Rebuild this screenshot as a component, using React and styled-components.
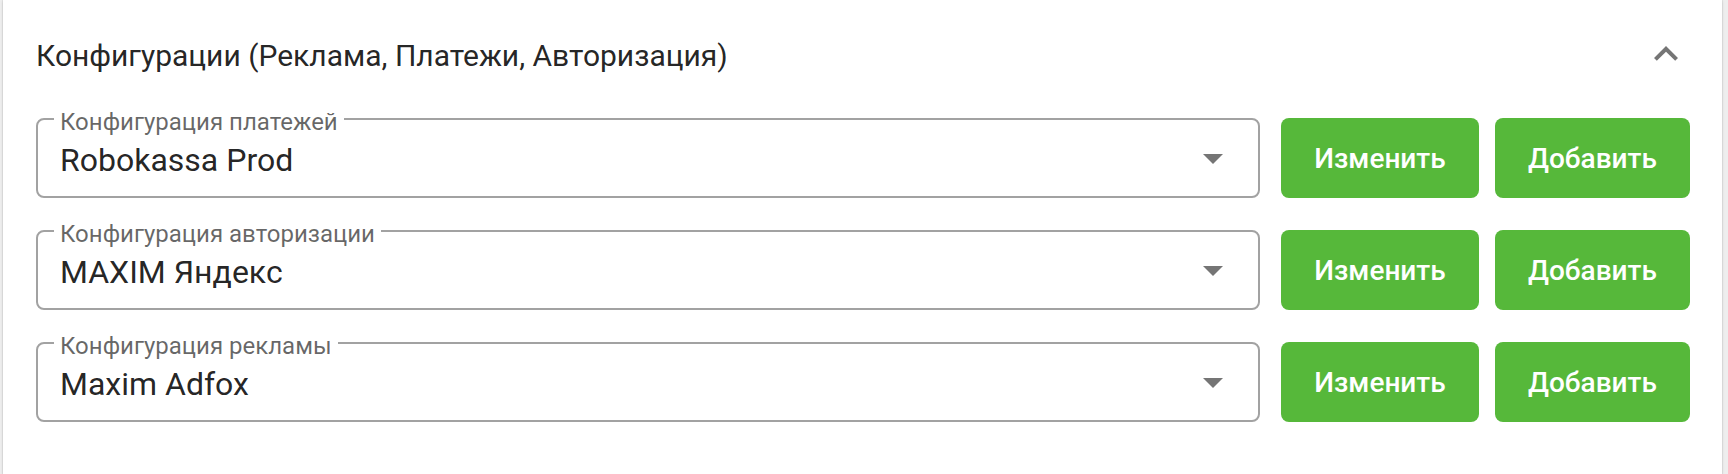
import React from 'react';
import styled, { createGlobalStyle } from 'styled-components';

const Global = createGlobalStyle`
  html, body {
    margin: 0;
    padding: 0;
    background: #eeeeee;
  }
  body {
    font-family: Roboto, "Noto Sans", "Liberation Sans", sans-serif;
  }
  * { box-sizing: border-box; }
`;

const Page = styled.div`
  padding: 0 6px 0 3px;
  min-height: 474px;
`;

const Card = styled.section`
  background: #ffffff;
  min-height: 474px;
  padding: 0 32px 0 33px;
  box-shadow: 0 0 1px rgba(0, 0, 0, 0.3), 0 1px 3px rgba(0, 0, 0, 0.12);
`;

const Header = styled.div`
  height: 107px;
  display: flex;
  align-items: center;
  justify-content: space-between;
`;

const Title = styled.h2`
  margin: 0;
  padding-top: 4px;
  font-size: 30px;
  font-weight: 400;
  line-height: 1.5;
  color: rgba(0, 0, 0, 0.87);
`;

const IconSvg = styled.svg`
  width: 48px;
  height: 48px;
  flex: none;
  fill: #757575;
  display: block;
`;

const Details = styled.div`
  padding-top: 11px;
  display: flex;
  flex-direction: column;
  gap: 32px;
`;

const Row = styled.div`
  display: flex;
  align-items: stretch;
  height: 80px;
`;

const Field = styled.div`
  position: relative;
  flex: 1;
  display: flex;
  align-items: center;
  border: 2px solid #a2a2a2;
  border-radius: 8px;
  padding: 0 21px 0 22px;
`;

const Label = styled.span`
  position: absolute;
  top: -10px;
  left: 16px;
  padding: 0 6px;
  background: #ffffff;
  font-size: 24px;
  line-height: 24px;
  color: rgba(0, 0, 0, 0.6);
  white-space: nowrap;
`;

const Value = styled.span`
  flex: 1;
  font-size: 32px;
  line-height: 1.4;
  color: rgba(0, 0, 0, 0.87);
  padding-top: 4px;
`;

const Actions = styled.div`
  display: flex;
  gap: 16px;
  margin-left: 21px;
`;

const Button = styled.button`
  width: ${(p) => p.$w}px;
  height: 80px;
  border: none;
  border-radius: 8px;
  background: #56b83a;
  color: #ffffff;
  font-family: Roboto, "Noto Sans", "Liberation Sans", sans-serif;
  font-size: 28px;
  font-weight: 500;
  cursor: pointer;
  padding: 0;
`;

const ChevronUp = () => (
  <IconSvg viewBox="0 0 24 24">
    <path d="M12 8l-6 6 1.41 1.41L12 10.83l4.59 4.58L18 14z" />
  </IconSvg>
);

const ArrowDrop = () => (
  <IconSvg viewBox="0 0 24 24">
    <path d="M7 10l5 5 5-5z" />
  </IconSvg>
);

const rows = [
  { label: 'Конфигурация платежей', value: 'Robokassa Prod' },
  { label: 'Конфигурация авторизации', value: 'MAXIM Яндекс' },
  { label: 'Конфигурация рекламы', value: 'Maxim Adfox' },
];

export default function App() {
  return (
    <>
      <Global />
      <Page>
        <Card>
          <Header>
            <Title>Конфигурации (Реклама, Платежи, Авторизация)</Title>
            <ChevronUp />
          </Header>
          <Details>
            {rows.map((r) => (
              <Row key={r.label}>
                <Field>
                  <Label>{r.label}</Label>
                  <Value>{r.value}</Value>
                  <ArrowDrop />
                </Field>
                <Actions>
                  <Button $w={198}>Изменить</Button>
                  <Button $w={195}>Добавить</Button>
                </Actions>
              </Row>
            ))}
          </Details>
        </Card>
      </Page>
    </>
  );
}
